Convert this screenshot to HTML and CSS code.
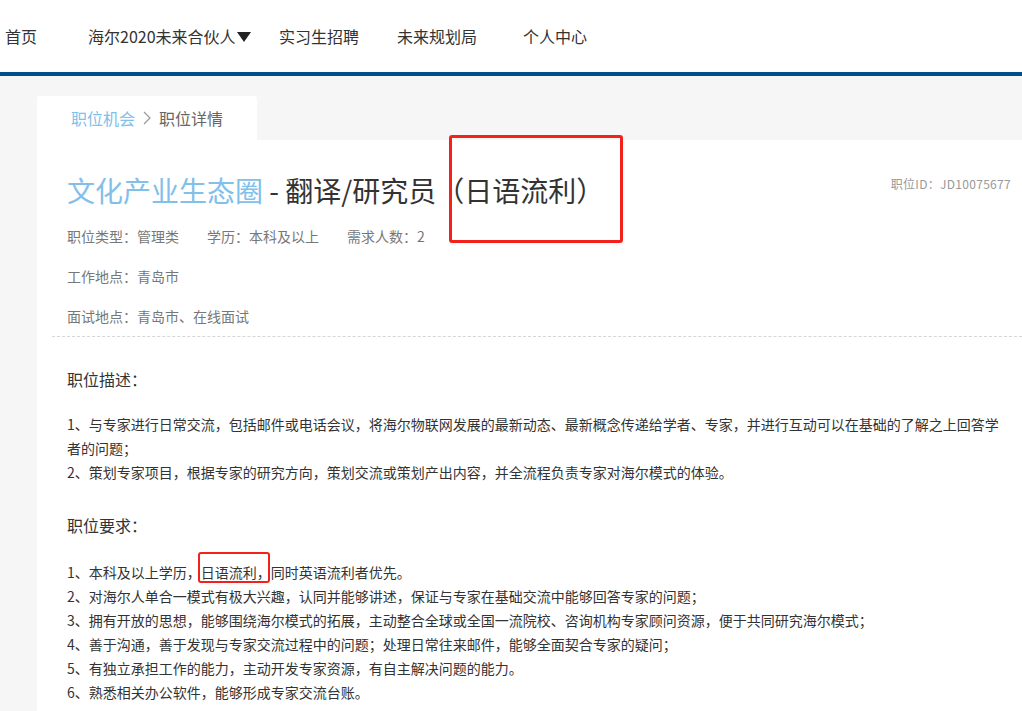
FILE: index.html
```html
<!DOCTYPE html>
<html lang="zh-CN">
<head>
    <meta charset="UTF-8">
    <meta name="viewport" content="width=device-width, initial-scale=1.0">
    <title>职位详情</title>
    <link rel="stylesheet" href="styles.css">
</head>
<body>
    <header class="topbar">
        <nav class="nav">
            <a class="nav-item" href="#">首页</a>
            <a class="nav-item has-menu" href="#">海尔2020未来合伙人</a>
            <a class="nav-item" href="#">实习生招聘</a>
            <a class="nav-item" href="#">未来规划局</a>
            <a class="nav-item" href="#">个人中心</a>
        </nav>
    </header>

    <main class="page">
        <div class="crumb-tab">
            <a class="crumb-link" href="#">职位机会</a>
            <svg class="crumb-arrow" width="8" height="14" viewBox="0 0 8 14">
                <path d="M1 1 L7 7 L1 13" fill="none" stroke="#999" stroke-width="1.2"/>
            </svg>
            <span class="crumb-current">职位详情</span>
        </div>

        <section class="job-card">
            <div class="job-info">
                <div class="job-head">
                    <h1 class="job-title"><span class="job-group">文化产业生态圈</span> - 翻译/研究员<span class="mark mark-title">（日语流利）</span></h1>
                    <span class="job-id">职位ID：JD10075677</span>
                </div>
                <div class="job-meta">
                    <span>职位类型：管理类</span>
                    <span>学历：本科及以上</span>
                    <span>需求人数：2</span>
                </div>
                <div class="job-meta">工作地点：青岛市</div>
                <div class="job-meta">面试地点：青岛市、在线面试</div>
            </div>

            <!-- 职位描述 -->
            <div class="job-section">
                <h2 class="section-title">职位描述：</h2>
                <p class="section-text">
                    1、与专家进行日常交流，包括邮件或电话会议，将海尔物联网发展的最新动态、最新概念传递给学者、专家，并进行互动可以在基础的了解之上回答学者的问题；<br>
                    2、策划专家项目，根据专家的研究方向，策划交流或策划产出内容，并全流程负责专家对海尔模式的体验。
                </p>
            </div>

            <!-- 职位要求 -->
            <div class="job-section">
                <h2 class="section-title section-title-req">职位要求：</h2>
                <p class="section-text section-text-req">
                    1、本科及以上学历，<span class="mark mark-text">日语流利，</span>同时英语流利者优先。<br>
                    2、对海尔人单合一模式有极大兴趣，认同并能够讲述，保证与专家在基础交流中能够回答专家的问题；<br>
                    3、拥有开放的思想，能够围绕海尔模式的拓展，主动整合全球或全国一流院校、咨询机构专家顾问资源，便于共同研究海尔模式；<br>
                    4、善于沟通，善于发现与专家交流过程中的问题；处理日常往来邮件，能够全面契合专家的疑问；<br>
                    5、有独立承担工作的能力，主动开发专家资源，有自主解决问题的能力。<br>
                    6、熟悉相关办公软件，能够形成专家交流台账。
                </p>
            </div>
        </section>
    </main>
</body>
</html>
```

FILE: styles.css
```css
* {
    box-sizing: border-box;
}
html, body {
    margin: 0;
    padding: 0;
}
body {
    font-family: "Microsoft YaHei", "Noto Sans CJK SC", sans-serif;
    color: #333;
    background-color: #f6f6f6;
    overflow-x: hidden;
}
a {
    text-decoration: none;
}

/* 顶部导航 */
.topbar {
    height: 76px;
    background-color: #fff;
    border-bottom: 4px solid #02508a;
}
.nav {
    display: grid;
    grid-template-columns: 83px 191px 118px 126px auto;
    padding-left: 5px;
    height: 72px;
    align-items: center;
}
.nav-item {
    font-size: 16px;
    line-height: 24px;
    color: #333;
    white-space: nowrap;
}
.has-menu::after {
    content: "";
    display: inline-block;
    width: 0;
    height: 0;
    margin-left: 1px;
    border-left: 7px solid transparent;
    border-right: 7px solid transparent;
    border-top: 10px solid #222;
    vertical-align: 1px;
}

/* 主体 */
.page {
    margin-left: 37px;
    padding-top: 20px;
}
.crumb-tab {
    display: flex;
    align-items: center;
    width: 220px;
    height: 44px;
    padding-left: 34px;
    background-color: #fff;
    border-radius: 3px 3px 0 0;
    font-size: 16px;
}
.crumb-link {
    color: #80c0ea;
}
.crumb-arrow {
    margin: 0 8px;
}
.crumb-current {
    color: #666;
}

.job-card {
    background-color: #fff;
    padding-top: 30px;
    padding-bottom: 40px;
    min-height: 600px;
}
.job-info {
    margin-left: 15px;
    padding: 0 11px 0 15px;
    border-bottom: 1px dashed #d6d6d6;
}
.job-head {
    display: flex;
    justify-content: space-between;
    align-items: flex-start;
}
.job-title {
    margin: 0;
    font-size: 28px;
    line-height: 40px;
    font-weight: normal;
    color: #333;
    white-space: nowrap;
}
.job-group {
    color: #80c0ea;
}
.job-id {
    margin-top: 4px;
    font-size: 12px;
    line-height: 20px;
    color: #999;
    letter-spacing: 0.3px;
}
.job-meta {
    display: flex;
    gap: 28px;
    font-size: 14px;
    line-height: 40px;
    color: #777;
}
.job-head + .job-meta {
    margin-top: 6px;
}

/* 标注框 */
.mark {
    position: relative;
}
.mark::after {
    content: "";
    position: absolute;
    border: 3px solid #f2211b;
    border-radius: 3px;
}
.mark-title::after {
    top: -35px;
    bottom: -33px;
    left: 13px;
    right: -19px;
}
.mark-text::after {
    top: -10px;
    bottom: -1px;
    left: -3px;
    right: 1px;
    border-width: 2px;
}

/* 职位描述 / 要求 */
.job-section {
    padding-left: 30px;
    max-width: 968px;
}
.section-title {
    margin: 30px 0 21px;
    font-size: 16px;
    line-height: 24px;
    font-weight: normal;
    color: #333;
}
.section-title-req {
    margin-top: 29px;
    margin-bottom: 23px;
}
.section-text {
    margin: 0;
    font-size: 14px;
    line-height: 24px;
    color: #333;
}
```
